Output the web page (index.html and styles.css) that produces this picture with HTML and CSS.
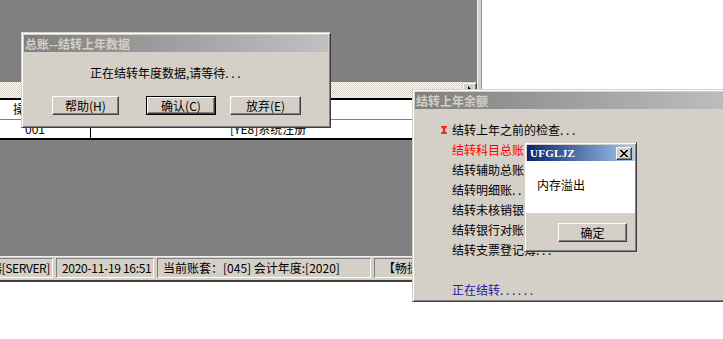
FILE: index.html
```html
<!DOCTYPE html>
<html>
<head>
<meta charset="utf-8">
<link rel="stylesheet" href="styles.css">
</head>
<body>
<div class="desktop">
  <div class="app">
    <div class="app-main">
      <div class="mdi-top"></div>
      <div class="hscroll">
        <div class="hscroll-track"></div>
        <div class="hscroll-btn"><span class="arrow-right"></span></div>
      </div>
      <div class="grid">
        <div class="grid-row grid-head">
          <div class="cell c1">操作员</div>
          <div class="cell c2"></div>
        </div>
        <div class="grid-row grid-data">
          <div class="cell c1">001</div>
          <div class="cell c2">[YE8]系统注册</div>
        </div>
      </div>
      <div class="mdi-bottom"></div>
      <div class="statusbar">
        <div class="sb-cell sb1"><span>服务器[SERVER]</span></div>
        <div class="sb-cell sb2">2020-11-19 16:51</div>
        <div class="sb-cell sb3">当前账套：[045] 会计年度:[2020]</div>
        <div class="sb-cell sb4">【畅捷通软件】</div>
      </div>
    </div>
    <div class="app-frame"></div>
  </div>

  <div class="win win-carry">
    <div class="titlebar inactive">总账--结转上年数据</div>
    <div class="carry-body">
      <div class="carry-msg">正在结转年度数据,请等待<span class="dots">...</span></div>
      <div class="carry-btns">
        <div class="btn btn-help">帮助(H)</div>
        <div class="btn-default"><div class="btn btn-ok">确认(C)</div></div>
        <div class="btn btn-cancel">放弃(E)</div>
      </div>
    </div>
  </div>

  <div class="win win-balance">
    <div class="titlebar inactive">结转上年余额</div>
    <div class="balance-body">
      <div class="step"><span class="marker"><svg width="6" height="8" viewBox="0 0 6 8"><path d="M0 0H6V1L4 3V5L6 7V8H0V7L2 5V3L0 1Z" fill="#ff2020"/></svg></span>结转上年之前的检查<span class="dots">...</span></div>
      <div class="step red"><span class="marker"></span>结转科目总账<span class="dots">...</span></div>
      <div class="step"><span class="marker"></span>结转辅助总账<span class="dots">...</span></div>
      <div class="step"><span class="marker"></span>结转明细账<span class="dots">...</span></div>
      <div class="step"><span class="marker"></span>结转未核销银行对账单<span class="dots">...</span></div>
      <div class="step"><span class="marker"></span>结转银行对账单<span class="dots">...</span></div>
      <div class="step"><span class="marker"></span>结转支票登记簿<span class="dots">...</span></div>
      <div class="progress">正在结转<span class="dots">......</span></div>
    </div>
  </div>

  <div class="win win-msg">
    <div class="titlebar active">
      <span class="title-text">UFGLJZ</span>
      <span class="close-btn"><svg width="8" height="7" viewBox="0 0 8 7"><path d="M0 0L7 7M1 0L8 7M7 0L0 7M8 0L1 7" stroke="#000" stroke-width="1" fill="none"/></svg></span>
    </div>
    <div class="msg-content">内存溢出</div>
    <div class="msg-foot">
      <div class="btn btn-confirm">确定</div>
    </div>
  </div>
</div>
</body>
</html>
```

FILE: styles.css
```css
* { box-sizing: border-box; }

body {
  margin: 0;
  background: #fff;
  font-family: "Noto Sans CJK SC", sans-serif;
  font-size: 12px;
  line-height: 16px;
  color: #000;
}

.desktop {
  position: relative;
  width: 723px;
  height: 339px;
  overflow: hidden;
  background: #fff;
}

.dots {
  letter-spacing: 2.6px;
}

/* background application window */
.app {
  display: flex;
  width: 482px;
  height: 282px;
}

.app-main {
  width: 477px;
  display: flex;
  flex-direction: column;
  overflow: hidden;
}

.app-frame {
  width: 5px;
  background: #d4d0c8;
  border-left: 1px solid #f4f4f4;
  border-right: 1px solid #9a9a9a;
}

.mdi-top {
  height: 82px;
  flex: none;
  background: #808080;
}

.hscroll {
  height: 16px;
  flex: none;
  display: flex;
}

.hscroll-track {
  flex: 1;
  background: repeating-conic-gradient(#ffffff 0 25%, #d4d0c8 0 50%) 0 0 / 2px 2px;
}

.hscroll-btn {
  width: 15px;
  background: #d4d0c8;
  border: 1px solid;
  border-color: #d4d0c8 #404040 #404040 #d4d0c8;
  box-shadow: inset 1px 1px #fff, inset -1px -1px #808080;
  display: flex;
  align-items: center;
  justify-content: center;
}

.arrow-right {
  width: 0;
  height: 0;
  border-top: 4px solid transparent;
  border-bottom: 4px solid transparent;
  border-left: 4px solid #000;
  margin-left: 1px;
}

.grid {
  flex: none;
  background: #fff;
  border-top: 2px solid #000;
  border-bottom: 2px solid #000;
}

.grid-row {
  display: flex;
  height: 18px;
}

.grid-head {
  height: 20px;
  border-bottom: 1px solid #808080;
}

.cell {
  line-height: 18px;
  white-space: nowrap;
}

.c1 {
  width: 91px;
  border-right: 1px solid #000;
  padding-left: 13px;
}

.grid-data .c1 {
  padding-left: 25px;
}

.c2 {
  flex: 1;
  padding-left: 139px;
}

.mdi-bottom {
  height: 116px;
  flex: none;
  background: #808080;
}

.statusbar {
  height: 26px;
  flex: none;
  background: #d4d0c8;
  border-top: 1px solid #f0f0f0;
  border-bottom: 2px solid #404040;
  padding: 1px 0 2px;
  display: flex;
  gap: 3px;
  overflow: hidden;
}

.sb-cell {
  flex: none;
  height: 20px;
  border: 1px solid;
  border-color: #808080 #fff #fff #808080;
  line-height: 18px;
  white-space: nowrap;
  overflow: hidden;
  padding-left: 5px;
}

.sb1 {
  width: 53px;
  border-left: none;
  padding: 0 2px 0 0;
  display: flex;
  justify-content: flex-end;
  letter-spacing: -0.4px;
}

.sb2 { width: 98px; letter-spacing: -0.3px; }
.sb3 { width: 214px; }
.sb4 { width: 140px; padding-left: 8px; }

/* floating windows */
.win {
  position: absolute;
  background: #d4d0c8;
  border: 1px solid;
  border-color: #d4d0c8 #404040 #404040 #d4d0c8;
  box-shadow: inset 1px 1px #fff, inset -1px -1px #808080;
  padding: 2px;
  display: flex;
  flex-direction: column;
}

.titlebar {
  height: 17px;
  flex: none;
  display: flex;
  align-items: center;
  padding-left: 1px;
  font-weight: bold;
  white-space: nowrap;
  overflow: hidden;
}

.titlebar.inactive {
  color: #d4d0c8;
  background: linear-gradient(to right, #808080, #c0c0c0);
}

.titlebar.active {
  color: #fff;
  background: linear-gradient(to right, #0a246a, #a6caf0);
  justify-content: space-between;
  padding-left: 3px;
  padding-right: 2px;
}

.btn {
  height: 19px;
  background: #d4d0c8;
  border: 1px solid;
  border-color: #fff #404040 #404040 #fff;
  box-shadow: inset -1px -1px #808080;
  display: flex;
  align-items: center;
  justify-content: center;
  line-height: 16px;
  white-space: nowrap;
}

/* dialog 1 */
.win-carry {
  left: 21px;
  top: 32px;
  width: 310px;
  height: 96px;
}

.carry-body {
  padding-top: 13px;
}

.carry-msg {
  padding-left: 66px;
}

.carry-btns {
  display: flex;
  margin-top: 15px;
  padding-left: 28px;
}

.btn-help {
  width: 67px;
}

.btn-default {
  margin-left: 27px;
  border: 1px solid #000;
}

.btn-ok {
  width: 68px;
  height: 17px;
}

.btn-cancel {
  width: 71px;
  margin-left: 14px;
}

/* dialog 2 */
.win-balance {
  left: 412px;
  top: 89px;
  width: 330px;
  height: 213px;
}

.balance-body {
  padding: 11px 0 0 26px;
}

.step {
  display: flex;
  align-items: center;
  height: 20px;
  white-space: nowrap;
}

.step.red {
  color: #ff0000;
}

.marker {
  width: 11px;
  flex: none;
  display: flex;
  align-items: center;
}

.progress {
  margin-top: 20px;
  height: 20px;
  line-height: 20px;
  padding-left: 11px;
  color: #1c1c9c;
}

/* dialog 3 */
.win-msg {
  left: 524px;
  top: 142px;
  width: 113px;
  height: 110px;
}

.win-msg .titlebar {
  height: 16px;
}

.title-text {
  font-family: "Liberation Serif", serif;
  font-size: 11px;
  letter-spacing: 0.3px;
}

.close-btn {
  width: 16px;
  height: 13px;
  background: #d4d0c8;
  border: 1px solid;
  border-color: #fff #404040 #404040 #fff;
  box-shadow: inset -1px -1px #808080;
  display: flex;
  align-items: center;
  justify-content: center;
}

.msg-content {
  background: #fff;
  height: 52px;
  margin: 0 -1px;
  padding: 16px 0 0 11px;
}

.msg-foot {
  padding: 10px 0 0 31px;
}

.btn-confirm {
  width: 69px;
}
```
